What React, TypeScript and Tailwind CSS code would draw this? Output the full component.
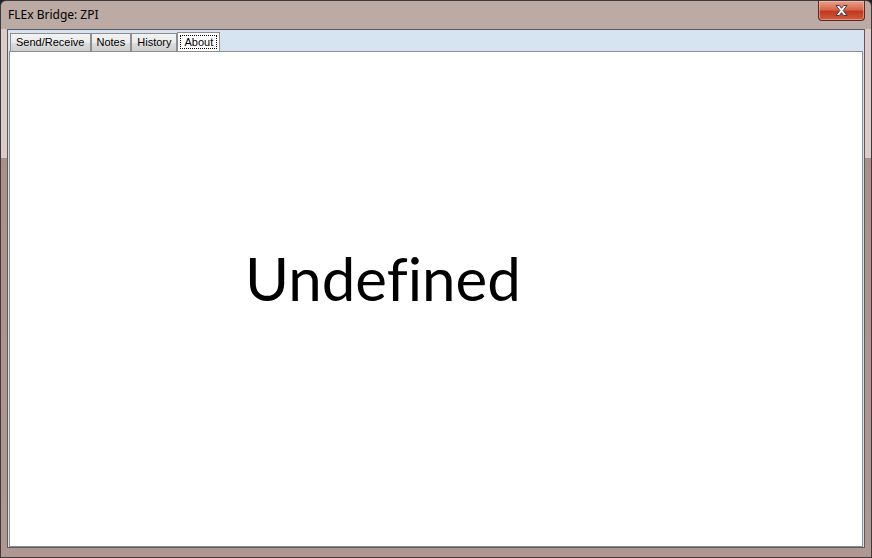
import React from "react";

const tabs = ["Send/Receive", "Notes", "History"];

function CloseButton() {
  return (
    <div className="flex h-[20px] w-[47px] items-center justify-center rounded-b-[4px] border border-t-0 border-[#5a2a22] bg-[linear-gradient(180deg,#e9a08c_0%,#d8664c_45%,#c2391f_55%,#cf5a3c_100%)] shadow-[inset_0_0_0_1px_rgba(255,210,200,0.45)]">
      <svg width="15" height="13" viewBox="0 0 15 13">
        <path
          d="M2 1.5 L5.3 1.5 L7.5 4.3 L9.7 1.5 L13 1.5 L9.2 6.5 L13 11.5 L9.7 11.5 L7.5 8.7 L5.3 11.5 L2 11.5 L5.8 6.5 Z"
          fill="#ffffff"
          stroke="#3d3d46"
          strokeWidth="1"
          strokeLinejoin="round"
        />
      </svg>
    </div>
  );
}

export default function App() {
  return (
    <div className="h-[558px] w-[872px] overflow-hidden bg-[#1a1f2c]">
      <div className="flex h-full w-full flex-col rounded-t-[6px] border border-[#3f3a3a] bg-[linear-gradient(180deg,#bcaaa4_0px,#bcaaa4_28px,#dccbc6_28px,#dccbc6_157px,#a99089_157px,#b09892_100%)]">
        {/* title bar */}
        <div className="flex h-[28px] shrink-0 items-start justify-between pl-[7px] pr-[6px]">
          <span className="mt-[6px] font-['Noto_Sans',sans-serif] text-[12px] leading-[15px] text-black">
            FLEx Bridge: ZPI
          </span>
          <CloseButton />
        </div>

        {/* client area */}
        <div className="mx-[6px] mb-[9px] flex min-h-0 flex-1 flex-col border border-[#5c5a5e] bg-[#d6e4f2] px-[1px]">
          <div className="flex h-[21px] shrink-0 items-end pl-[1px] font-['Liberation_Sans',Arial,sans-serif] text-[11px] text-black">
            {tabs.map((t) => (
              <div
                key={t}
                className="flex h-[18px] items-center border border-b-0 border-[#8c8e94] bg-[linear-gradient(180deg,#f2f2f2_0%,#ebebeb_50%,#dddddd_51%,#cfcfcf_100%)] px-[5px] leading-none"
              >
                {t}
              </div>
            ))}
            <div className="-mb-px flex h-[20px] items-start border border-b-0 border-[#8c8e94] bg-white px-[2px] pt-[2px]">
              <span className="border border-dotted border-black px-[3px] leading-[12px]">
                About
              </span>
            </div>
          </div>
          <div className="flex min-h-0 flex-1 border border-[#8c8e94] bg-white">
            <div className="ml-[235px] mt-[196px] font-['Lato','Open_Sans',sans-serif] text-[60px] leading-none text-black [font-variant-ligatures:none]">
              Undefined
            </div>
          </div>
        </div>
      </div>
    </div>
  );
}
